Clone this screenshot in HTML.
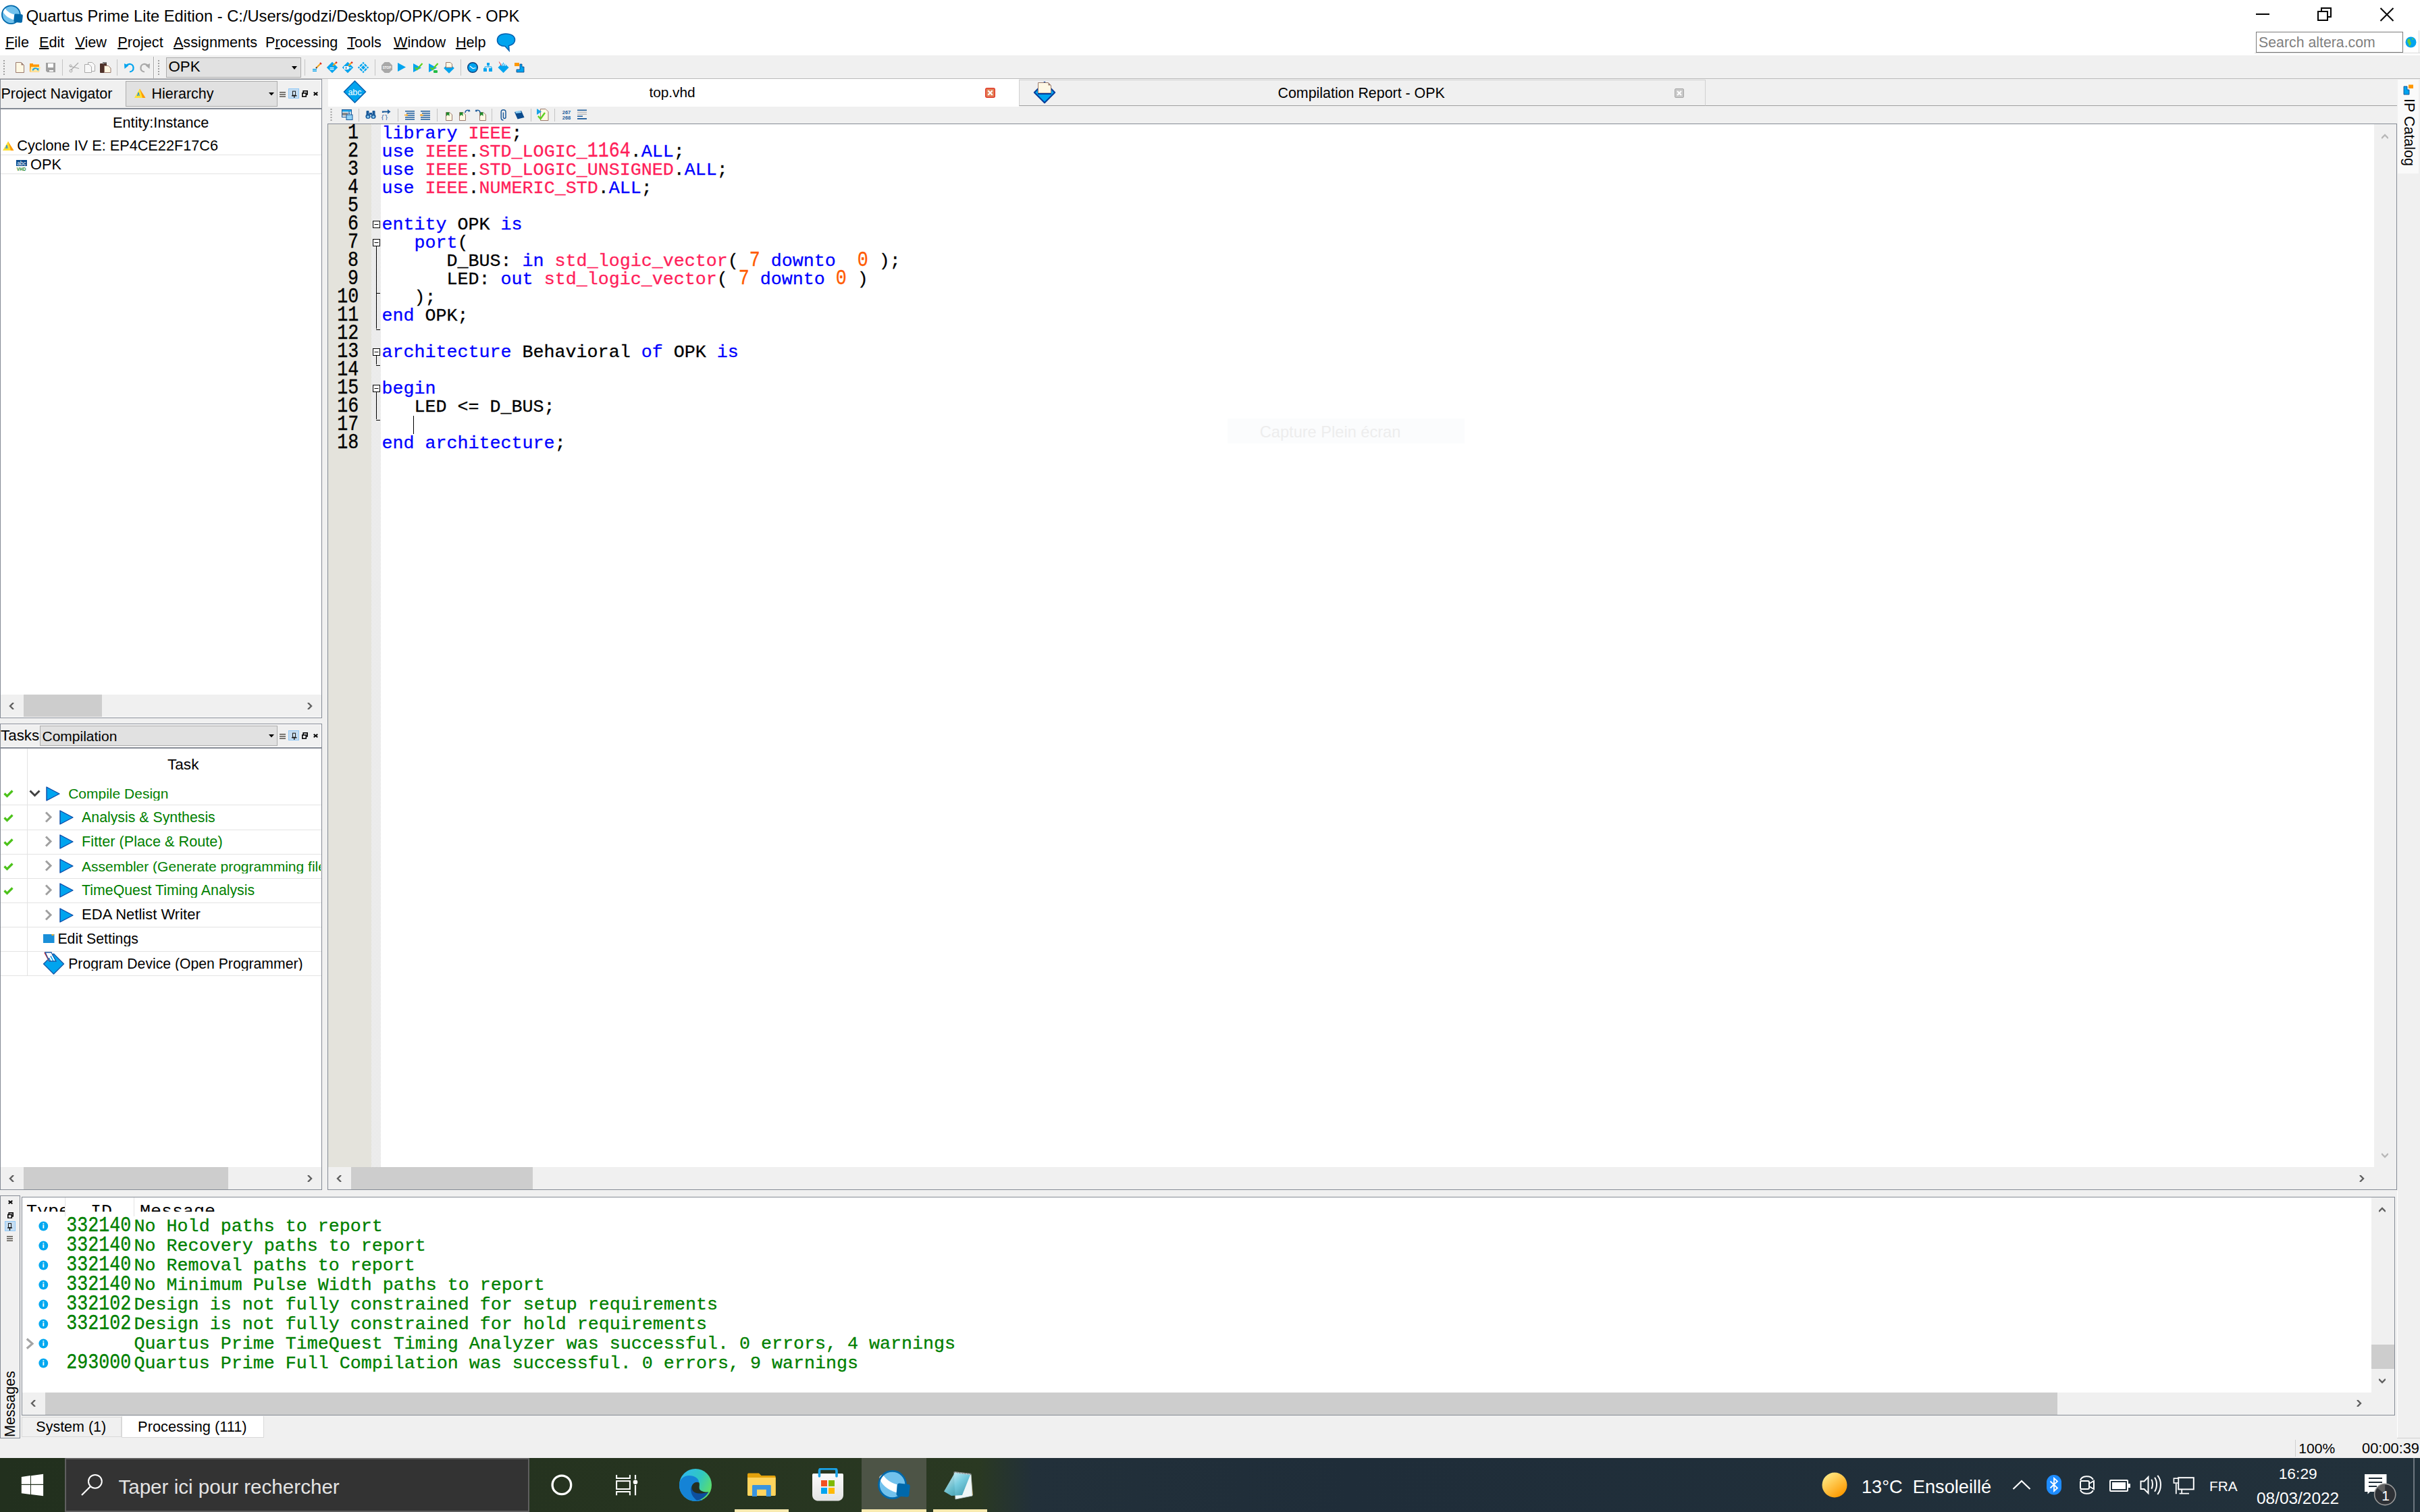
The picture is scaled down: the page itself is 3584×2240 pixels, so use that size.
<!DOCTYPE html>
<html><head><meta charset="utf-8"><style>
html,body{margin:0;padding:0}
body{width:3584px;height:2240px;position:relative;overflow:hidden;background:#f0f0f0;font-family:'Liberation Sans', sans-serif}
.t{position:absolute;white-space:pre;line-height:1}
.r{position:absolute}
.dg{display:inline-block;transform:scaleY(1.15);transform-origin:0 20.3px}
u{text-decoration:underline;text-underline-offset:1px;text-decoration-thickness:2px}
</style></head><body>
<div class="r" style="left:0px;top:0px;width:3584px;height:82px;background:#fff"></div>
<div class="t" style="left:38.7px;top:13.1px;font-size:23.7px;color:#000;font-family:'Liberation Sans', sans-serif;">Quartus Prime Lite Edition - C:/Users/godzi/Desktop/OPK/OPK - OPK</div>
<div class="r" style="left:3341px;top:20px;width:20px;height:2px;background:#000"></div>
<div class="r" style="left:3437px;top:11px;width:16px;height:15px;border:2px solid #000;box-sizing:border-box;background:#fff"></div>
<div class="r" style="left:3432px;top:16px;width:16px;height:15px;border:2px solid #000;box-sizing:border-box;background:#fff"></div>
<svg class="r" style="left:3524px;top:11px" width="22" height="21"><path d="M1.5 1L20.5 20M20.5 1L1.5 20" stroke="#000" stroke-width="2"/></svg>
<div class="t" style="left:8.0px;top:51.8px;font-size:21.7px;color:#000;font-family:'Liberation Sans', sans-serif;"><u>F</u>ile</div>
<div class="t" style="left:58.0px;top:51.8px;font-size:21.7px;color:#000;font-family:'Liberation Sans', sans-serif;"><u>E</u>dit</div>
<div class="t" style="left:111.4px;top:51.8px;font-size:21.7px;color:#000;font-family:'Liberation Sans', sans-serif;"><u>V</u>iew</div>
<div class="t" style="left:174.2px;top:51.8px;font-size:21.7px;color:#000;font-family:'Liberation Sans', sans-serif;"><u>P</u>roject</div>
<div class="t" style="left:256.9px;top:51.8px;font-size:21.7px;color:#000;font-family:'Liberation Sans', sans-serif;"><u>A</u>ssignments</div>
<div class="t" style="left:393.0px;top:51.8px;font-size:21.7px;color:#000;font-family:'Liberation Sans', sans-serif;">P<u>r</u>ocessing</div>
<div class="t" style="left:514.2px;top:51.8px;font-size:21.7px;color:#000;font-family:'Liberation Sans', sans-serif;"><u>T</u>ools</div>
<div class="t" style="left:583.0px;top:51.8px;font-size:21.7px;color:#000;font-family:'Liberation Sans', sans-serif;"><u>W</u>indow</div>
<div class="t" style="left:674.9px;top:51.8px;font-size:21.7px;color:#000;font-family:'Liberation Sans', sans-serif;"><u>H</u>elp</div>
<div class="r" style="left:3341px;top:47px;width:218px;height:31px;border:1px solid #7a7a7a;box-sizing:border-box;background:#fff"></div>
<div class="t" style="left:3345.0px;top:52.5px;font-size:21.3px;color:#7f7f7f;font-family:'Liberation Sans', sans-serif;">Search altera.com</div>
<div class="r" style="left:3339px;top:78px;width:245px;height:1px;background:#d9d9d9"></div>
<div class="r" style="left:3582px;top:45px;width:1px;height:34px;background:#d9d9d9"></div>
<div class="r" style="left:0px;top:83px;width:3584px;height:33px;background:#f0f0f0"></div>
<div class="r" style="left:0px;top:116px;width:3584px;height:1px;background:#b9b9b9"></div>
<div class="r" style="left:246px;top:85px;width:200px;height:30px;background:#e1e1e1;border:1px solid #adadad;box-sizing:border-box"></div>
<div class="t" style="left:249.5px;top:88.1px;font-size:22.3px;color:#000;font-family:'Liberation Sans', sans-serif;">OPK</div>
<div class="r" style="left:0px;top:117px;width:477px;height:947px;border:1px solid #858b95;box-sizing:border-box;background:#fff"></div>
<div class="r" style="left:1px;top:118px;width:475px;height:42px;background:#f0f0f0;border-top:1px solid #fff;border-right:1px solid #fff;box-sizing:border-box"></div>
<div class="r" style="left:1px;top:160px;width:475px;height:2px;background:#858b95"></div>
<div class="t" style="left:1.5px;top:129.1px;font-size:21.5px;color:#000;font-family:'Liberation Sans', sans-serif;">Project Navigator</div>
<div class="r" style="left:186px;top:120px;width:225px;height:38px;background:#e1e1e1;border:1px solid #adadad;box-sizing:border-box"></div>
<div class="t" style="left:224.5px;top:129.1px;font-size:21.5px;color:#000;font-family:'Liberation Sans', sans-serif;">Hierarchy</div>
<div class="t" style="left:167.1px;top:170.6px;font-size:21.7px;color:#000;font-family:'Liberation Sans', sans-serif;">Entity:Instance</div>
<div class="t" style="left:25.3px;top:204.6px;font-size:21.7px;color:#000;font-family:'Liberation Sans', sans-serif;">Cyclone IV E: EP4CE22F17C6</div>
<div class="r" style="left:1px;top:229px;width:475px;height:1px;background:#e3e3e3"></div>
<div class="t" style="left:45.1px;top:233.4px;font-size:21.7px;color:#000;font-family:'Liberation Sans', sans-serif;">OPK</div>
<div class="r" style="left:1px;top:257px;width:475px;height:1px;background:#e3e3e3"></div>
<div class="r" style="left:1px;top:1029px;width:475px;height:33px;background:#f0f0f0"></div>
<div class="r" style="left:35px;top:1029px;width:116px;height:33px;background:#cdcdcd"></div>
<div class="r" style="left:0px;top:1072px;width:477px;height:691px;border:1px solid #858b95;box-sizing:border-box;background:#fff"></div>
<div class="r" style="left:1px;top:1073px;width:475px;height:34px;background:#f0f0f0;border-top:1px solid #fff;border-right:1px solid #fff;border-bottom:1px solid #fff;box-sizing:border-box"></div>
<div class="r" style="left:1px;top:1107px;width:475px;height:2px;background:#858b95"></div>
<div class="t" style="left:1.0px;top:1078.9px;font-size:22.4px;color:#000;font-family:'Liberation Sans', sans-serif;">Tasks</div>
<div class="r" style="left:59px;top:1075px;width:352px;height:30px;background:#e1e1e1;border:1px solid #adadad;box-sizing:border-box"></div>
<div class="t" style="left:62.5px;top:1080.1px;font-size:21.0px;color:#000;font-family:'Liberation Sans', sans-serif;">Compilation</div>
<div class="r" style="left:40px;top:1109px;width:1px;height:336px;background:#e3e3e3"></div>
<div class="t" style="left:248.0px;top:1121.9px;font-size:22.6px;color:#000;font-family:'Liberation Sans', sans-serif;">Task</div>
<div class="t" style="left:101.2px;top:1164.6px;font-size:21.0px;color:#008000;font-family:'Liberation Sans', sans-serif;width:374px;overflow:hidden">Compile Design</div>
<div class="r" style="left:1px;top:1192px;width:475px;height:1px;background:#e3e3e3"></div>
<div class="t" style="left:121.1px;top:1200.5px;font-size:21.3px;color:#008000;font-family:'Liberation Sans', sans-serif;width:354px;overflow:hidden">Analysis &amp; Synthesis</div>
<div class="r" style="left:1px;top:1229px;width:475px;height:1px;background:#e3e3e3"></div>
<div class="t" style="left:121.1px;top:1236.2px;font-size:21.7px;color:#008000;font-family:'Liberation Sans', sans-serif;width:354px;overflow:hidden">Fitter (Place &amp; Route)</div>
<div class="r" style="left:1px;top:1265px;width:475px;height:1px;background:#e3e3e3"></div>
<div class="t" style="left:121.1px;top:1272.9px;font-size:21.0px;color:#008000;font-family:'Liberation Sans', sans-serif;width:354px;overflow:hidden">Assembler (Generate programming files)</div>
<div class="r" style="left:1px;top:1301px;width:475px;height:1px;background:#e3e3e3"></div>
<div class="t" style="left:121.1px;top:1308.8px;font-size:21.3px;color:#008000;font-family:'Liberation Sans', sans-serif;width:354px;overflow:hidden">TimeQuest Timing Analysis</div>
<div class="r" style="left:1px;top:1337px;width:475px;height:1px;background:#e3e3e3"></div>
<div class="t" style="left:121.1px;top:1344.3px;font-size:22.0px;color:#000;font-family:'Liberation Sans', sans-serif;width:354px;overflow:hidden">EDA Netlist Writer</div>
<div class="r" style="left:1px;top:1373px;width:475px;height:1px;background:#e3e3e3"></div>
<div class="t" style="left:85.4px;top:1381.0px;font-size:21.3px;color:#000;font-family:'Liberation Sans', sans-serif;width:390px;overflow:hidden">Edit Settings</div>
<div class="r" style="left:1px;top:1409px;width:475px;height:1px;background:#e3e3e3"></div>
<div class="t" style="left:101.2px;top:1417.2px;font-size:21.2px;color:#000;font-family:'Liberation Sans', sans-serif;width:374px;overflow:hidden">Program Device (Open Programmer)</div>
<div class="r" style="left:1px;top:1445px;width:475px;height:1px;background:#e3e3e3"></div>
<div class="r" style="left:1px;top:1729px;width:475px;height:33px;background:#f0f0f0"></div>
<div class="r" style="left:35px;top:1729px;width:303px;height:33px;background:#cdcdcd"></div>
<div class="r" style="left:485px;top:117px;width:3065px;height:41px;background:#f0f0f0"></div>
<div class="r" style="left:486px;top:117px;width:1023px;height:41px;background:#fff"></div>
<div class="r" style="left:1509px;top:118px;width:1017px;height:39px;background:#f0f0f0;border:1px solid #d0d0d0;border-bottom:1px solid #a0a0a0;box-sizing:border-box"></div>
<div class="r" style="left:2526px;top:156px;width:1024px;height:1px;background:#a0a0a0"></div>
<div class="t" style="left:961.4px;top:127.4px;font-size:20.8px;color:#000;font-family:'Liberation Sans', sans-serif;">top.vhd</div>
<div class="t" style="left:1892.5px;top:128.2px;font-size:21.4px;color:#000;font-family:'Liberation Sans', sans-serif;">Compilation Report - OPK</div>
<div class="r" style="left:485px;top:158px;width:3065px;height:25px;background:#f0f0f0"></div>
<div class="r" style="left:485px;top:183px;width:3065px;height:1580px;border:1px solid #858b95;box-sizing:border-box;background:#fff"></div>
<div class="r" style="left:486px;top:184px;width:64px;height:1545px;background:#e4e3dc"></div>
<div class="r" style="left:550px;top:184px;width:14px;height:1545px;background:repeating-conic-gradient(#d8d8d8 0 25%,#ffffff 0 50%) 0 0/2px 2px"></div>
<div class="r" style="left:3516px;top:184px;width:33px;height:1545px;background:#f0f0f0"></div>
<div class="r" style="left:486px;top:1729px;width:3063px;height:33px;background:#f0f0f0"></div>
<div class="r" style="left:520px;top:1729px;width:269px;height:33px;background:#cdcdcd"></div>
<div class="t" style="left:565.5px;top:185.3px;font-size:26.68px;color:#000;font-family:'Liberation Mono', monospace;-webkit-text-stroke:0.3px currentColor;"><span style="color:#0000ff">library</span><span style="color:#000"> </span><span style="color:#ff1f5a">IEEE</span><span style="color:#000">;</span></div>
<div class="t" style="left:515.1px;top:185.3px;font-size:26.68px;color:#000;font-family:'Liberation Mono', monospace;-webkit-text-stroke:0.3px currentColor;"><span class="dg">1</span></div>
<div class="t" style="left:565.5px;top:212.3px;font-size:26.68px;color:#000;font-family:'Liberation Mono', monospace;-webkit-text-stroke:0.3px currentColor;"><span style="color:#0000ff">use</span><span style="color:#000"> </span><span style="color:#ff1f5a">IEEE</span><span style="color:#000">.</span><span style="color:#ff1f5a">STD_LOGIC_<span class="dg">1164</span></span><span style="color:#000">.</span><span style="color:#0000ff">ALL</span><span style="color:#000">;</span></div>
<div class="t" style="left:515.1px;top:212.3px;font-size:26.68px;color:#000;font-family:'Liberation Mono', monospace;-webkit-text-stroke:0.3px currentColor;"><span class="dg">2</span></div>
<div class="t" style="left:565.5px;top:239.3px;font-size:26.68px;color:#000;font-family:'Liberation Mono', monospace;-webkit-text-stroke:0.3px currentColor;"><span style="color:#0000ff">use</span><span style="color:#000"> </span><span style="color:#ff1f5a">IEEE</span><span style="color:#000">.</span><span style="color:#ff1f5a">STD_LOGIC_UNSIGNED</span><span style="color:#000">.</span><span style="color:#0000ff">ALL</span><span style="color:#000">;</span></div>
<div class="t" style="left:515.1px;top:239.3px;font-size:26.68px;color:#000;font-family:'Liberation Mono', monospace;-webkit-text-stroke:0.3px currentColor;"><span class="dg">3</span></div>
<div class="t" style="left:565.5px;top:266.3px;font-size:26.68px;color:#000;font-family:'Liberation Mono', monospace;-webkit-text-stroke:0.3px currentColor;"><span style="color:#0000ff">use</span><span style="color:#000"> </span><span style="color:#ff1f5a">IEEE</span><span style="color:#000">.</span><span style="color:#ff1f5a">NUMERIC_STD</span><span style="color:#000">.</span><span style="color:#0000ff">ALL</span><span style="color:#000">;</span></div>
<div class="t" style="left:515.1px;top:266.3px;font-size:26.68px;color:#000;font-family:'Liberation Mono', monospace;-webkit-text-stroke:0.3px currentColor;"><span class="dg">4</span></div>
<div class="t" style="left:565.5px;top:293.3px;font-size:26.68px;color:#000;font-family:'Liberation Mono', monospace;-webkit-text-stroke:0.3px currentColor;"></div>
<div class="t" style="left:515.1px;top:293.3px;font-size:26.68px;color:#000;font-family:'Liberation Mono', monospace;-webkit-text-stroke:0.3px currentColor;"><span class="dg">5</span></div>
<div class="t" style="left:565.5px;top:320.3px;font-size:26.68px;color:#000;font-family:'Liberation Mono', monospace;-webkit-text-stroke:0.3px currentColor;"><span style="color:#0000ff">entity</span><span style="color:#000"> OPK </span><span style="color:#0000ff">is</span></div>
<div class="t" style="left:515.1px;top:320.3px;font-size:26.68px;color:#000;font-family:'Liberation Mono', monospace;-webkit-text-stroke:0.3px currentColor;"><span class="dg">6</span></div>
<div class="t" style="left:565.5px;top:347.3px;font-size:26.68px;color:#000;font-family:'Liberation Mono', monospace;-webkit-text-stroke:0.3px currentColor;"><span style="color:#000">   </span><span style="color:#0000ff">port</span><span style="color:#000">(</span></div>
<div class="t" style="left:515.1px;top:347.3px;font-size:26.68px;color:#000;font-family:'Liberation Mono', monospace;-webkit-text-stroke:0.3px currentColor;"><span class="dg">7</span></div>
<div class="t" style="left:565.5px;top:374.3px;font-size:26.68px;color:#000;font-family:'Liberation Mono', monospace;-webkit-text-stroke:0.3px currentColor;"><span style="color:#000">      D_BUS: </span><span style="color:#0000ff">in</span><span style="color:#000"> </span><span style="color:#ff1f5a">std_logic_vector</span><span style="color:#000">( </span><span style="color:#ff5a00"><span class="dg">7</span></span><span style="color:#000"> </span><span style="color:#0000ff">downto</span><span style="color:#000">  </span><span style="color:#ff5a00"><span class="dg">0</span></span><span style="color:#000"> );</span></div>
<div class="t" style="left:515.1px;top:374.3px;font-size:26.68px;color:#000;font-family:'Liberation Mono', monospace;-webkit-text-stroke:0.3px currentColor;"><span class="dg">8</span></div>
<div class="t" style="left:565.5px;top:401.3px;font-size:26.68px;color:#000;font-family:'Liberation Mono', monospace;-webkit-text-stroke:0.3px currentColor;"><span style="color:#000">      LED: </span><span style="color:#0000ff">out</span><span style="color:#000"> </span><span style="color:#ff1f5a">std_logic_vector</span><span style="color:#000">( </span><span style="color:#ff5a00"><span class="dg">7</span></span><span style="color:#000"> </span><span style="color:#0000ff">downto</span><span style="color:#000"> </span><span style="color:#ff5a00"><span class="dg">0</span></span><span style="color:#000"> )</span></div>
<div class="t" style="left:515.1px;top:401.3px;font-size:26.68px;color:#000;font-family:'Liberation Mono', monospace;-webkit-text-stroke:0.3px currentColor;"><span class="dg">9</span></div>
<div class="t" style="left:565.5px;top:428.3px;font-size:26.68px;color:#000;font-family:'Liberation Mono', monospace;-webkit-text-stroke:0.3px currentColor;"><span style="color:#000">   );</span></div>
<div class="t" style="left:499.2px;top:428.3px;font-size:26.68px;color:#000;font-family:'Liberation Mono', monospace;-webkit-text-stroke:0.3px currentColor;"><span class="dg">10</span></div>
<div class="t" style="left:565.5px;top:455.3px;font-size:26.68px;color:#000;font-family:'Liberation Mono', monospace;-webkit-text-stroke:0.3px currentColor;"><span style="color:#0000ff">end</span><span style="color:#000"> OPK;</span></div>
<div class="t" style="left:499.2px;top:455.3px;font-size:26.68px;color:#000;font-family:'Liberation Mono', monospace;-webkit-text-stroke:0.3px currentColor;"><span class="dg">11</span></div>
<div class="t" style="left:565.5px;top:482.3px;font-size:26.68px;color:#000;font-family:'Liberation Mono', monospace;-webkit-text-stroke:0.3px currentColor;"></div>
<div class="t" style="left:499.2px;top:482.3px;font-size:26.68px;color:#000;font-family:'Liberation Mono', monospace;-webkit-text-stroke:0.3px currentColor;"><span class="dg">12</span></div>
<div class="t" style="left:565.5px;top:509.3px;font-size:26.68px;color:#000;font-family:'Liberation Mono', monospace;-webkit-text-stroke:0.3px currentColor;"><span style="color:#0000ff">architecture</span><span style="color:#000"> Behavioral </span><span style="color:#0000ff">of</span><span style="color:#000"> OPK </span><span style="color:#0000ff">is</span></div>
<div class="t" style="left:499.2px;top:509.3px;font-size:26.68px;color:#000;font-family:'Liberation Mono', monospace;-webkit-text-stroke:0.3px currentColor;"><span class="dg">13</span></div>
<div class="t" style="left:565.5px;top:536.3px;font-size:26.68px;color:#000;font-family:'Liberation Mono', monospace;-webkit-text-stroke:0.3px currentColor;"></div>
<div class="t" style="left:499.2px;top:536.3px;font-size:26.68px;color:#000;font-family:'Liberation Mono', monospace;-webkit-text-stroke:0.3px currentColor;"><span class="dg">14</span></div>
<div class="t" style="left:565.5px;top:563.3px;font-size:26.68px;color:#000;font-family:'Liberation Mono', monospace;-webkit-text-stroke:0.3px currentColor;"><span style="color:#0000ff">begin</span></div>
<div class="t" style="left:499.2px;top:563.3px;font-size:26.68px;color:#000;font-family:'Liberation Mono', monospace;-webkit-text-stroke:0.3px currentColor;"><span class="dg">15</span></div>
<div class="t" style="left:565.5px;top:590.3px;font-size:26.68px;color:#000;font-family:'Liberation Mono', monospace;-webkit-text-stroke:0.3px currentColor;"><span style="color:#000">   LED &lt;= D_BUS;</span></div>
<div class="t" style="left:499.2px;top:590.3px;font-size:26.68px;color:#000;font-family:'Liberation Mono', monospace;-webkit-text-stroke:0.3px currentColor;"><span class="dg">16</span></div>
<div class="t" style="left:565.5px;top:617.3px;font-size:26.68px;color:#000;font-family:'Liberation Mono', monospace;-webkit-text-stroke:0.3px currentColor;"></div>
<div class="t" style="left:499.2px;top:617.3px;font-size:26.68px;color:#000;font-family:'Liberation Mono', monospace;-webkit-text-stroke:0.3px currentColor;"><span class="dg">17</span></div>
<div class="t" style="left:565.5px;top:644.3px;font-size:26.68px;color:#000;font-family:'Liberation Mono', monospace;-webkit-text-stroke:0.3px currentColor;"><span style="color:#0000ff">end</span><span style="color:#000"> </span><span style="color:#0000ff">architecture</span><span style="color:#000">;</span></div>
<div class="t" style="left:499.2px;top:644.3px;font-size:26.68px;color:#000;font-family:'Liberation Mono', monospace;-webkit-text-stroke:0.3px currentColor;"><span class="dg">18</span></div>
<div class="r" style="left:1818px;top:620px;width:351px;height:37px;background:#fbfcfd"></div>
<div class="t" style="left:1865.8px;top:629.0px;font-size:23.6px;color:#ededed;font-family:'Liberation Sans', sans-serif;">Capture Plein écran</div>
<div class="r" style="left:3551px;top:118px;width:31px;height:139px;background:#fafafa"></div>
<div class="t" style="left:3556px;top:146px;font-size:21.5px;font-family:'Liberation Sans', sans-serif;transform-origin:0 0;transform:translate(22px,0) rotate(90deg)">IP Catalog</div>
<div class="r" style="left:3550px;top:1764px;width:1px;height:366px;background:#fff"></div>
<div class="r" style="left:3550px;top:2130px;width:34px;height:1px;background:#d0d0d0"></div>
<div class="r" style="left:0px;top:1771px;width:30px;height:360px;border:1px solid #858b95;box-sizing:border-box;background:#f0f0f0"></div>
<div class="r" style="left:32px;top:1773px;width:3515px;height:324px;border:1px solid #858b95;box-sizing:border-box;background:#fff"></div>
<div class="r" style="left:3512px;top:1774px;width:34px;height:289px;background:#f0f0f0"></div>
<div class="r" style="left:3512px;top:1992px;width:34px;height:36px;background:#cdcdcd"></div>
<div class="r" style="left:33px;top:2063px;width:3513px;height:33px;background:#f0f0f0"></div>
<div class="r" style="left:67px;top:2063px;width:2980px;height:33px;background:#cdcdcd"></div>
<div class="t" style="left:98.2px;top:1803.5px;font-size:26.68px;color:#008000;font-family:'Liberation Mono', monospace;-webkit-text-stroke:0.3px currentColor;"><span class="dg">332140</span></div>
<div class="t" style="left:198.6px;top:1803.5px;font-size:26.68px;color:#008000;font-family:'Liberation Mono', monospace;-webkit-text-stroke:0.3px currentColor;">No Hold paths to report</div>
<svg class="r" style="left:57px;top:1809.2px" width="15" height="15"><circle cx="7.3" cy="7.5" r="6.9" fill="#00a8f0"/><rect x="6.4" y="5.6" width="1.9" height="5.2" fill="#fff"/><rect x="6.4" y="3.2" width="1.9" height="1.4" fill="#fff"/></svg>
<div class="t" style="left:98.2px;top:1832.5px;font-size:26.68px;color:#008000;font-family:'Liberation Mono', monospace;-webkit-text-stroke:0.3px currentColor;"><span class="dg">332140</span></div>
<div class="t" style="left:198.6px;top:1832.5px;font-size:26.68px;color:#008000;font-family:'Liberation Mono', monospace;-webkit-text-stroke:0.3px currentColor;">No Recovery paths to report</div>
<svg class="r" style="left:57px;top:1838.2px" width="15" height="15"><circle cx="7.3" cy="7.5" r="6.9" fill="#00a8f0"/><rect x="6.4" y="5.6" width="1.9" height="5.2" fill="#fff"/><rect x="6.4" y="3.2" width="1.9" height="1.4" fill="#fff"/></svg>
<div class="t" style="left:98.2px;top:1861.5px;font-size:26.68px;color:#008000;font-family:'Liberation Mono', monospace;-webkit-text-stroke:0.3px currentColor;"><span class="dg">332140</span></div>
<div class="t" style="left:198.6px;top:1861.5px;font-size:26.68px;color:#008000;font-family:'Liberation Mono', monospace;-webkit-text-stroke:0.3px currentColor;">No Removal paths to report</div>
<svg class="r" style="left:57px;top:1867.2px" width="15" height="15"><circle cx="7.3" cy="7.5" r="6.9" fill="#00a8f0"/><rect x="6.4" y="5.6" width="1.9" height="5.2" fill="#fff"/><rect x="6.4" y="3.2" width="1.9" height="1.4" fill="#fff"/></svg>
<div class="t" style="left:98.2px;top:1890.5px;font-size:26.68px;color:#008000;font-family:'Liberation Mono', monospace;-webkit-text-stroke:0.3px currentColor;"><span class="dg">332140</span></div>
<div class="t" style="left:198.6px;top:1890.5px;font-size:26.68px;color:#008000;font-family:'Liberation Mono', monospace;-webkit-text-stroke:0.3px currentColor;">No Minimum Pulse Width paths to report</div>
<svg class="r" style="left:57px;top:1896.2px" width="15" height="15"><circle cx="7.3" cy="7.5" r="6.9" fill="#00a8f0"/><rect x="6.4" y="5.6" width="1.9" height="5.2" fill="#fff"/><rect x="6.4" y="3.2" width="1.9" height="1.4" fill="#fff"/></svg>
<div class="t" style="left:98.2px;top:1919.5px;font-size:26.68px;color:#008000;font-family:'Liberation Mono', monospace;-webkit-text-stroke:0.3px currentColor;"><span class="dg">332102</span></div>
<div class="t" style="left:198.6px;top:1919.5px;font-size:26.68px;color:#008000;font-family:'Liberation Mono', monospace;-webkit-text-stroke:0.3px currentColor;">Design is not fully constrained for setup requirements</div>
<svg class="r" style="left:57px;top:1925.2px" width="15" height="15"><circle cx="7.3" cy="7.5" r="6.9" fill="#00a8f0"/><rect x="6.4" y="5.6" width="1.9" height="5.2" fill="#fff"/><rect x="6.4" y="3.2" width="1.9" height="1.4" fill="#fff"/></svg>
<div class="t" style="left:98.2px;top:1948.5px;font-size:26.68px;color:#008000;font-family:'Liberation Mono', monospace;-webkit-text-stroke:0.3px currentColor;"><span class="dg">332102</span></div>
<div class="t" style="left:198.6px;top:1948.5px;font-size:26.68px;color:#008000;font-family:'Liberation Mono', monospace;-webkit-text-stroke:0.3px currentColor;">Design is not fully constrained for hold requirements</div>
<svg class="r" style="left:57px;top:1954.2px" width="15" height="15"><circle cx="7.3" cy="7.5" r="6.9" fill="#00a8f0"/><rect x="6.4" y="5.6" width="1.9" height="5.2" fill="#fff"/><rect x="6.4" y="3.2" width="1.9" height="1.4" fill="#fff"/></svg>
<div class="t" style="left:98.2px;top:1977.5px;font-size:26.68px;color:#008000;font-family:'Liberation Mono', monospace;-webkit-text-stroke:0.3px currentColor;"></div>
<div class="t" style="left:198.6px;top:1977.5px;font-size:26.68px;color:#008000;font-family:'Liberation Mono', monospace;-webkit-text-stroke:0.3px currentColor;">Quartus Prime TimeQuest Timing Analyzer was successful. 0 errors, 4 warnings</div>
<svg class="r" style="left:57px;top:1983.2px" width="15" height="15"><circle cx="7.3" cy="7.5" r="6.9" fill="#00a8f0"/><rect x="6.4" y="5.6" width="1.9" height="5.2" fill="#fff"/><rect x="6.4" y="3.2" width="1.9" height="1.4" fill="#fff"/></svg>
<div class="t" style="left:98.2px;top:2006.5px;font-size:26.68px;color:#008000;font-family:'Liberation Mono', monospace;-webkit-text-stroke:0.3px currentColor;"><span class="dg">293000</span></div>
<div class="t" style="left:198.6px;top:2006.5px;font-size:26.68px;color:#008000;font-family:'Liberation Mono', monospace;-webkit-text-stroke:0.3px currentColor;">Quartus Prime Full Compilation was successful. 0 errors, 9 warnings</div>
<svg class="r" style="left:57px;top:2012.2px" width="15" height="15"><circle cx="7.3" cy="7.5" r="6.9" fill="#00a8f0"/><rect x="6.4" y="5.6" width="1.9" height="5.2" fill="#fff"/><rect x="6.4" y="3.2" width="1.9" height="1.4" fill="#fff"/></svg>
<div class="r" style="left:33px;top:1774px;width:3479px;height:21px;overflow:hidden"><div class="t" style="left:6px;top:8.0px;width:57px;overflow:hidden;font-size:26.68px;font-family:'Liberation Mono', monospace">Type</div><div class="t" style="left:101px;top:8.0px;font-size:26.68px;font-family:'Liberation Mono', monospace">ID</div><div class="t" style="left:174px;top:8.0px;font-size:26.68px;font-family:'Liberation Mono', monospace">Message</div></div>
<div class="r" style="left:96px;top:1774px;width:1px;height:28px;background:#e3e3e3"></div>
<div class="r" style="left:198px;top:1774px;width:1px;height:28px;background:#e3e3e3"></div>
<div class="t" style="left:5px;top:2129px;font-size:21.5px;font-family:'Liberation Sans', sans-serif;transform-origin:0 0;transform:rotate(-90deg)">Messages</div>
<div class="r" style="left:32px;top:2099px;width:148px;height:30px;background:#f0f0f0;border:1px solid #d9d9d9;box-sizing:border-box"></div>
<div class="r" style="left:180px;top:2098px;width:211px;height:32px;background:#fff;border:1px solid #d9d9d9;border-top:none;box-sizing:border-box"></div>
<div class="t" style="left:53.3px;top:2103.8px;font-size:21.5px;color:#000;font-family:'Liberation Sans', sans-serif;">System (1)</div>
<div class="t" style="left:204.1px;top:2103.0px;font-size:21.8px;color:#000;font-family:'Liberation Sans', sans-serif;">Processing (111)</div>
<div class="r" style="left:3399px;top:2133px;width:1px;height:25px;background:#d0d0d0"></div>
<div class="t" style="left:3404.2px;top:2135.1px;font-size:21.1px;color:#000;font-family:'Liberation Sans', sans-serif;">100%</div>
<div class="t" style="left:3498.1px;top:2134.5px;font-size:21.8px;color:#000;font-family:'Liberation Sans', sans-serif;">00:00:39</div>
<div class="r" style="left:0;top:2160px;width:3584px;height:80px;background:linear-gradient(90deg,#22301e 0px,#263420 1000px,#2a3922 1450px,#22303a 1530px,#1f2d39 2000px,#22313b 3584px)"></div>
<div class="r" style="left:96px;top:2160px;width:688px;height:80px;background:#333;border:2px solid #5f5f5f;box-sizing:border-box"></div>
<div class="t" style="left:175.4px;top:2187.7px;font-size:29.6px;color:#e3e3e3;font-family:'Liberation Sans', sans-serif;">Taper ici pour rechercher</div>
<div class="r" style="left:1276px;top:2160px;width:96px;height:80px;background:#4d5446"></div>
<div class="t" style="left:2757.0px;top:2188.9px;font-size:27.2px;color:#fff;font-family:'Liberation Sans', sans-serif;">13°C  Ensoleillé</div>
<div class="t" style="left:3272.0px;top:2192.4px;font-size:20.8px;color:#fff;font-family:'Liberation Sans', sans-serif;">FRA</div>
<div class="t" style="left:3374.7px;top:2171.7px;font-size:22.8px;color:#fff;font-family:'Liberation Sans', sans-serif;">16:29</div>
<div class="t" style="left:3342.0px;top:2208.3px;font-size:24.4px;color:#fff;font-family:'Liberation Sans', sans-serif;">08/03/2022</div>
<svg class="r" style="left:0px;top:0px;" width="36" height="37" viewBox="0 0 36 37"><circle cx="16.4" cy="21.7" r="13.4" fill="#72c2ed"/><path d="M3.5 14.5 C5 21 11 26.5 20.5 29.5 L21 21.5 C15 20 10 16.5 7 11.5 C5.5 12 4 13 3.5 14.5 Z" fill="#fff"/><circle cx="16.4" cy="21.7" r="13.4" fill="none" stroke="#0068aa" stroke-width="1.8"/><rect x="20.8" y="20.8" width="12.6" height="12.6" rx="2" fill="#0068aa" transform="rotate(6 27 27)"/></svg>
<svg class="r" style="left:735px;top:48px;" width="30" height="30" viewBox="0 0 30 30"><path d="M14 2 C6 2 1.5 6 1.5 11.5 C1.5 17 6 20.5 13 20.5 L19 27 L18.5 19.8 C24 18.5 27.5 15.5 27.5 11 C27.5 5.5 22 2 14 2 Z" fill="#00a4ef" stroke="#0060b0" stroke-width="1.6"/></svg>
<svg class="r" style="left:3562px;top:54px;" width="17" height="17" viewBox="0 0 17 17"><circle cx="8.5" cy="8.5" r="8" fill="#00a4ef"/><path d="M4 4 C6 3 8 4 7.5 6 C7 8 9 8 9 10 C9 12 7 13 7 15 C5 13 5.5 11 4.5 10 C3.5 9 2.5 7 4 4Z M10 2 C12 3 13 4 12 5 C11 6 10 4 10 2Z" fill="#6ccb3b"/></svg>
<svg class="r" style="left:4px;top:87px;" width="4" height="27" viewBox="0 0 4 27"><rect x="1" y="2" width="2" height="2" fill="#a0a0a0"/><rect x="1" y="6" width="2" height="2" fill="#a0a0a0"/><rect x="1" y="10" width="2" height="2" fill="#a0a0a0"/><rect x="1" y="14" width="2" height="2" fill="#a0a0a0"/><rect x="1" y="18" width="2" height="2" fill="#a0a0a0"/><rect x="1" y="22" width="2" height="2" fill="#a0a0a0"/></svg>
<svg class="r" style="left:233px;top:87px;" width="4" height="27" viewBox="0 0 4 27"><rect x="1" y="2" width="2" height="2" fill="#a0a0a0"/><rect x="1" y="6" width="2" height="2" fill="#a0a0a0"/><rect x="1" y="10" width="2" height="2" fill="#a0a0a0"/><rect x="1" y="14" width="2" height="2" fill="#a0a0a0"/><rect x="1" y="18" width="2" height="2" fill="#a0a0a0"/><rect x="1" y="22" width="2" height="2" fill="#a0a0a0"/></svg>
<div class="r" style="left:227px;top:84px;width:1px;height:32px;background:#a8a8a8"></div>
<div class="r" style="left:228px;top:84px;width:1px;height:32px;background:#fff"></div>
<div class="r" style="left:92px;top:88px;width:1px;height:24px;background:#c4c4c4"></div>
<div class="r" style="left:173px;top:88px;width:1px;height:24px;background:#c4c4c4"></div>
<div class="r" style="left:451px;top:88px;width:1px;height:24px;background:#c4c4c4"></div>
<div class="r" style="left:555px;top:88px;width:1px;height:24px;background:#c4c4c4"></div>
<div class="r" style="left:682px;top:88px;width:1px;height:24px;background:#c4c4c4"></div>
<svg class="r" style="left:23px;top:92px;" width="13" height="17" viewBox="0 0 13 17"><path d="M0.5 0.5 H8.5 L12.5 4.5 V15.5 H0.5 Z" fill="#fff8e4" stroke="#9b7b6e" stroke-width="1"/><path d="M8.5 0.5 V4.5 H12.5 Z" fill="#9b7b6e"/></svg>
<svg class="r" style="left:43px;top:93px;" width="18" height="15" viewBox="0 0 18 15"><path d="M1 1 H6 V2.5 H15 V13.5 H1 Z" fill="#ff9800"/><path d="M3 6 H17 L15.5 13.5 H1.5 Z" fill="#ffe7a2"/><path d="M5.5 11.5 C6 8 11 7 13 9.5" stroke="#1aa3e8" stroke-width="1.8" fill="none"/><path d="M11 10 L14.5 7.5 L14 12 Z" fill="#1aa3e8"/></svg>
<svg class="r" style="left:68px;top:93px;" width="14" height="14" viewBox="0 0 14 14"><path d="M0 0 H14 V14 H2 L0 12 Z" fill="#a0a0a0"/><rect x="3" y="1" width="8" height="6" fill="#fff"/><rect x="5" y="11" width="6" height="2" fill="#fff"/></svg>
<svg class="r" style="left:102px;top:92px;" width="16" height="16" viewBox="0 0 16 16"><path d="M3 12 L14 1 M1 6 L15 9.5" stroke="#a8a8a8" stroke-width="1.2" fill="none"/><circle cx="3" cy="13" r="2" fill="none" stroke="#a8a8a8"/><circle cx="2.5" cy="5.5" r="1.6" fill="none" stroke="#a8a8a8"/></svg>
<svg class="r" style="left:125px;top:92px;" width="16" height="17" viewBox="0 0 16 17"><path d="M5.5 0.5 H11.5 L15.5 4.5 V13.5 H5.5 Z" fill="#f8f8f8" stroke="#aaa"/><path d="M0.5 3.5 H7 L10.5 7 V15.5 H0.5 Z" fill="#f8f8f8" stroke="#aaa"/></svg>
<svg class="r" style="left:148px;top:92px;" width="17" height="17" viewBox="0 0 17 17"><rect x="0" y="2" width="7" height="14" rx="1" fill="#4e3129"/><rect x="4" y="0" width="6" height="3" fill="#7a7a7a"/><rect x="6" y="2" width="4" height="3" fill="#4e3129"/><path d="M6.5 5.5 H12.5 L16 9 V15.5 H6.5 Z" fill="#fff8e4" stroke="#9b7b6e"/></svg>
<svg class="r" style="left:183px;top:92px;" width="17" height="16" viewBox="0 0 17 16"><path d="M4 5.5 C7 1.5 14 2 14.5 8 C15 12 12 14 9 14.5" stroke="#00a4ef" stroke-width="2.2" fill="none"/><path d="M1 2 L1.5 10 L7.5 5 Z" fill="#00a4ef"/></svg>
<svg class="r" style="left:206px;top:92px;" width="17" height="16" viewBox="0 0 17 16"><path d="M13 5.5 C10 1.5 3 2 2.5 8 C2 12 5 14 8 14.5" stroke="#a8a8a8" stroke-width="2.2" fill="none"/><path d="M16 2 L15.5 10 L9.5 5 Z" fill="#a8a8a8"/></svg>
<svg class="r" style="left:432px;top:98px;" width="8" height="5" viewBox="0 0 8 5"><path d="M0 0 H8 L4 5 Z" fill="#000"/></svg>
<svg class="r" style="left:462px;top:92px;" width="15" height="14" viewBox="0 0 15 14"><rect x="1" y="10" width="6" height="1.4" fill="#00a4ef"/><rect x="1" y="12.5" width="6" height="1.4" fill="#00a4ef"/><path d="M6.5 8.5 L13 2" stroke="#f5a31a" stroke-width="2"/><path d="M12 1 L14 3" stroke="#e02020" stroke-width="2"/><path d="M6 9 L7.2 7.8" stroke="#333" stroke-width="2"/></svg>
<svg class="r" style="left:483px;top:91px;" width="18" height="18" viewBox="0 0 18 18"><path d="M9 0.8000000000000007 L17.2 9 L9 17.2 L0.8000000000000007 9 Z" fill="#00a4ef"/><rect x="5.5" y="9" width="6" height="1.2" fill="#fff"/><rect x="5.5" y="11.2" width="6" height="1.2" fill="#fff"/><path d="M10 6.5 L15 1.5" stroke="#f5a31a" stroke-width="2"/><path d="M14.3 0.8 L16 2.5" stroke="#e02020" stroke-width="2"/></svg>
<svg class="r" style="left:506px;top:91px;" width="18" height="18" viewBox="0 0 18 18"><path d="M9 0.8000000000000007 L17.2 9 L9 17.2 L0.8000000000000007 9 Z" fill="#00a4ef"/><path d="M3.5 7 H10 L11 9 H14.5 V10 H11 L10 12 H3.5 Z" fill="#fff"/><rect x="6" y="8" width="1" height="3" fill="#003c80"/><path d="M10 6.5 L15 1.5" stroke="#f5a31a" stroke-width="2"/><path d="M14.3 0.8 L16 2.5" stroke="#e02020" stroke-width="2"/></svg>
<svg class="r" style="left:529px;top:91px;" width="18" height="18" viewBox="0 0 18 18"><path d="M9 0.8000000000000007 L17.2 9 L9 17.2 L0.8000000000000007 9 Z" fill="#00a4ef"/><path d="M2 6 L12 16 M6 2 L16 12 M2 12 L12 2 M6 16 L16 6" stroke="#f0f0f0" stroke-width="1.3"/></svg>
<svg class="r" style="left:565px;top:92px;" width="16" height="16" viewBox="0 0 16 16"><path d="M4.7 0 H11.3 L16 4.7 V11.3 L11.3 16 H4.7 L0 11.3 V4.7 Z" fill="#a8a8a8"/><text x="1.8" y="10.3" font-family="Liberation Sans" font-size="5.6" font-weight="bold" fill="#fff" textLength="12.4" lengthAdjust="spacingAndGlyphs">STOP</text></svg>
<svg class="r" style="left:589px;top:93px;" width="13" height="14" viewBox="0 0 13 14"><path d="M0 0 L12 6.5 L0 13 Z" fill="#00a4ef"/></svg>
<svg class="r" style="left:612px;top:92px;" width="15" height="16" viewBox="0 0 15 16"><path d="M0 2 L12 8.5 L0 15 Z" fill="#00a4ef"/><path d="M2.5 8 L5.5 11 L13.5 2" stroke="#5ed21e" stroke-width="2.2" fill="none"/></svg>
<svg class="r" style="left:635px;top:92px;" width="16" height="18" viewBox="0 0 16 18"><path d="M0 2 L12 8.5 L0 15 Z" fill="#00a4ef"/><path d="M2.5 8 L5.5 11 L13.5 2" stroke="#5ed21e" stroke-width="2.2" fill="none"/><rect x="7" y="12" width="6" height="4" rx="1" fill="#22bb44"/></svg>
<svg class="r" style="left:657px;top:92px;" width="16" height="17" viewBox="0 0 16 17"><path d="M8 1.2000000000000002 L15.8 9 L8 16.8 L0.20000000000000018 9 Z" fill="#00a4ef"/><path d="M3.5 0.5 H10 L12.5 3 V8 H3.5 Z" fill="#fff8e4" stroke="#9b7b6e"/></svg>
<svg class="r" style="left:692px;top:92px;" width="16" height="16" viewBox="0 0 16 16"><circle cx="8" cy="8" r="7.3" fill="#00a4ef" stroke="#0a3d7a" stroke-width="1.4"/><path d="M4 6 L8.5 9.5 L12.5 8.5" stroke="#fff" stroke-width="1.2" fill="none"/></svg>
<svg class="r" style="left:715px;top:92px;" width="16" height="16" viewBox="0 0 16 16"><rect x="6" y="1" width="4" height="4" fill="#00a4ef"/><path d="M8 5 V7 H3 V9 M8 7 H13 V9" stroke="#00a4ef" fill="none"/><rect x="1" y="9" width="5" height="5" fill="#00a4ef"/><rect x="9" y="9" width="5" height="5" fill="#00a4ef"/></svg>
<svg class="r" style="left:737px;top:91px;" width="17" height="17" viewBox="0 0 17 17"><path d="M8.5 1 L16.5 9 L8.5 17 L0.5 9 Z" fill="#00a4ef"/><path d="M3.5 0.5 L7 6.5 M6 0.5 L9.5 6.5 M8.5 0.5 L12 6.5" stroke="#fff" stroke-width="1.2"/><path d="M2.3 0.5 L5.6 6.5" stroke="#e03030" stroke-width="1"/></svg>
<svg class="r" style="left:761px;top:92px;" width="16" height="16" viewBox="0 0 16 16"><rect x="1" y="1" width="7" height="5" fill="#ff9800"/><path d="M9 3 H12 V7 H15 V15 H4 V11 H9 Z" fill="#00a4ef" stroke="#003c80" stroke-width="0.8"/></svg>
<svg class="r" style="left:397.5px;top:136.5px;" width="8" height="5" viewBox="0 0 8 5"><path d="M0 0 H8 L4 4.5 Z" fill="#000"/></svg>
<svg class="r" style="left:414px;top:136px;" width="9" height="9" viewBox="0 0 9 9"><rect x="0" y="0" width="9" height="1.6" fill="#5f5b55"/><rect x="0" y="3.2" width="9" height="1.6" fill="#5f5b55"/><rect x="0" y="6.3" width="9" height="1.6" fill="#5f5b55"/></svg>
<svg class="r" style="left:427px;top:131px;" width="16" height="15" viewBox="0 0 16 15"><rect x="0.5" y="0.5" width="15" height="14" fill="#c5ddf2" stroke="#90c8f6"/><rect x="6.5" y="4.2" width="4" height="6" fill="#d8ecfa" stroke="#222" stroke-width="1.1"/><path d="M5 10.8 H12.5" stroke="#111" stroke-width="1.4"/><path d="M8.8 10.5 V14" stroke="#111" stroke-width="1.3"/></svg>
<svg class="r" style="left:447px;top:134px;" width="9" height="10" viewBox="0 0 9 10"><rect x="2.2" y="0.8" width="6" height="5" fill="none" stroke="#000" stroke-width="1.6"/><rect x="0.8" y="4" width="5.5" height="5" fill="#fff" stroke="#000" stroke-width="1.6"/></svg>
<svg class="r" style="left:463.5px;top:136px;" width="7" height="6" viewBox="0 0 7 6"><path d="M0.7 0.7 L6.3 5.3 M6.3 0.7 L0.7 5.3" stroke="#000" stroke-width="1.8"/></svg>
<svg class="r" style="left:397.5px;top:1087.5px;" width="8" height="5" viewBox="0 0 8 5"><path d="M0 0 H8 L4 4.5 Z" fill="#000"/></svg>
<svg class="r" style="left:414px;top:1087px;" width="9" height="9" viewBox="0 0 9 9"><rect x="0" y="0" width="9" height="1.6" fill="#5f5b55"/><rect x="0" y="3.2" width="9" height="1.6" fill="#5f5b55"/><rect x="0" y="6.3" width="9" height="1.6" fill="#5f5b55"/></svg>
<svg class="r" style="left:427px;top:1082px;" width="16" height="15" viewBox="0 0 16 15"><rect x="0.5" y="0.5" width="15" height="14" fill="#c5ddf2" stroke="#90c8f6"/><rect x="6.5" y="4.2" width="4" height="6" fill="#d8ecfa" stroke="#222" stroke-width="1.1"/><path d="M5 10.8 H12.5" stroke="#111" stroke-width="1.4"/><path d="M8.8 10.5 V14" stroke="#111" stroke-width="1.3"/></svg>
<svg class="r" style="left:447px;top:1085px;" width="9" height="10" viewBox="0 0 9 10"><rect x="2.2" y="0.8" width="6" height="5" fill="none" stroke="#000" stroke-width="1.6"/><rect x="0.8" y="4" width="5.5" height="5" fill="#fff" stroke="#000" stroke-width="1.6"/></svg>
<svg class="r" style="left:463.5px;top:1087px;" width="7" height="6" viewBox="0 0 7 6"><path d="M0.7 0.7 L6.3 5.3 M6.3 0.7 L0.7 5.3" stroke="#000" stroke-width="1.8"/></svg>
<svg class="r" style="left:199px;top:131px;" width="17" height="15" viewBox="0 0 17 15"><path d="M8 0.5 L16.5 14 L4 14 Z" fill="#ff9b00"/><path d="M8 0.5 L12 14 H0 Z" fill="#ffe033"/><path d="M6 6 L4.5 11 M6 6 L7.5 11 M6 8.5 L5.2 11" stroke="#1a8fe0" stroke-width="1"/></svg>
<svg class="r" style="left:4px;top:209px;" width="17" height="15" viewBox="0 0 17 15"><path d="M8 0.5 L16.5 14 L4 14 Z" fill="#ff9b00"/><path d="M8 0.5 L12 14 H0 Z" fill="#ffe033"/><path d="M6 6 L4.5 11 M6 6 L7.5 11 M6 8.5 L5.2 11" stroke="#1a8fe0" stroke-width="1"/></svg>
<svg class="r" style="left:24px;top:237px;" width="16" height="16" viewBox="0 0 16 16"><rect x="0" y="0" width="16" height="9" fill="#0a4a8c"/><text x="8" y="7.6" font-family="Liberation Sans" font-size="8.5" fill="#fff" text-anchor="middle">abc</text><text x="7.5" y="15.5" font-family="Liberation Sans" font-size="6.5" font-weight="bold" fill="#1f8a2a" text-anchor="middle">VHD</text></svg>
<svg class="r" style="left:13px;top:1041px;" width="9" height="10" viewBox="0 0 9 10"><path d="M7 0 L2 5 L7 10" stroke="#606060" stroke-width="2.4" fill="none"/></svg>
<svg class="r" style="left:454px;top:1041px;" width="9" height="10" viewBox="0 0 9 10"><path d="M2 0 L7 5 L2 10" stroke="#606060" stroke-width="2.4" fill="none"/></svg>
<svg class="r" style="left:13px;top:1741px;" width="9" height="10" viewBox="0 0 9 10"><path d="M7 0 L2 5 L7 10" stroke="#606060" stroke-width="2.4" fill="none"/></svg>
<svg class="r" style="left:454px;top:1741px;" width="9" height="10" viewBox="0 0 9 10"><path d="M2 0 L7 5 L2 10" stroke="#606060" stroke-width="2.4" fill="none"/></svg>
<svg class="r" style="left:498px;top:1741px;" width="9" height="10" viewBox="0 0 9 10"><path d="M7 0 L2 5 L7 10" stroke="#606060" stroke-width="2.4" fill="none"/></svg>
<svg class="r" style="left:3493px;top:1741px;" width="9" height="10" viewBox="0 0 9 10"><path d="M2 0 L7 5 L2 10" stroke="#606060" stroke-width="2.4" fill="none"/></svg>
<svg class="r" style="left:3527px;top:198px;" width="10" height="9" viewBox="0 0 10 9"><path d="M0 7 L5 2 L10 7" stroke="#b8b8b8" stroke-width="2.4" fill="none"/></svg>
<svg class="r" style="left:3527px;top:1707px;" width="10" height="9" viewBox="0 0 10 9"><path d="M0 2 L5 7 L10 2" stroke="#b8b8b8" stroke-width="2.4" fill="none"/></svg>
<svg class="r" style="left:45px;top:2074px;" width="9" height="10" viewBox="0 0 9 10"><path d="M7 0 L2 5 L7 10" stroke="#606060" stroke-width="2.4" fill="none"/></svg>
<svg class="r" style="left:3489px;top:2074px;" width="9" height="10" viewBox="0 0 9 10"><path d="M2 0 L7 5 L2 10" stroke="#606060" stroke-width="2.4" fill="none"/></svg>
<svg class="r" style="left:3523px;top:1788px;" width="10" height="9" viewBox="0 0 10 9"><path d="M0 7 L5 2 L10 7" stroke="#606060" stroke-width="2.4" fill="none"/></svg>
<svg class="r" style="left:3523px;top:2041px;" width="10" height="9" viewBox="0 0 10 9"><path d="M0 2 L5 7 L10 2" stroke="#606060" stroke-width="2.4" fill="none"/></svg>
<svg class="r" style="left:508px;top:119px;" width="35" height="34" viewBox="0 0 35 34"><path d="M17.5 1 L33.5 17 L17.5 33 L1.5 17 Z" fill="#00a4ef" stroke="#0060b0" stroke-width="1.5"/><text x="17.5" y="21.5" font-family="Liberation Sans" font-size="12.5" fill="#fff" text-anchor="middle">abc</text></svg>
<svg class="r" style="left:1459px;top:130px;" width="15" height="15" viewBox="0 0 15 15"><rect x="0.75" y="0.75" width="13.5" height="13.5" rx="2" fill="#e4845a" stroke="#e03a2a" stroke-width="1.5"/><path d="M4.3 4.3 L10.7 10.7 M10.7 4.3 L4.3 10.7" stroke="#fff" stroke-width="2.2"/></svg>
<svg class="r" style="left:1530px;top:120px;" width="34" height="34" viewBox="0 0 34 34"><path d="M17 1.8000000000000007 L32.2 17 L17 32.2 L1.8000000000000007 17 Z" fill="#00a4ef" stroke="#003c9a" stroke-width="2" stroke-linejoin="round"/><path d="M7.5 2.5 H22.5 L26.5 6.5 V18 H7.5 Z" fill="#fff8e4" stroke="#9b7b6e"/><path d="M22.5 2.5 V6.5 H26.5 Z" fill="#9b7b6e"/><rect x="7" y="18" width="20" height="2" fill="#003c9a"/></svg>
<svg class="r" style="left:2480px;top:131px;" width="14" height="14" viewBox="0 0 14 14"><rect x="0.5" y="0.5" width="13" height="13" rx="1.5" fill="#c8c8c8" stroke="#a8a8a8"/><path d="M4 4 L10 10 M10 4 L4 10" stroke="#fff" stroke-width="2"/></svg>
<svg class="r" style="left:489px;top:160px;" width="3" height="21" viewBox="0 0 3 21"><rect x="0.5" y="1" width="2" height="2" fill="#a0a0a0"/><rect x="0.5" y="5" width="2" height="2" fill="#a0a0a0"/><rect x="0.5" y="9" width="2" height="2" fill="#a0a0a0"/><rect x="0.5" y="13" width="2" height="2" fill="#a0a0a0"/><rect x="0.5" y="17" width="2" height="2" fill="#a0a0a0"/></svg>
<div class="r" style="left:531px;top:161px;width:1px;height:19px;background:#c4c4c4"></div>
<div class="r" style="left:589px;top:161px;width:1px;height:19px;background:#c4c4c4"></div>
<div class="r" style="left:647px;top:161px;width:1px;height:19px;background:#c4c4c4"></div>
<div class="r" style="left:728px;top:161px;width:1px;height:19px;background:#c4c4c4"></div>
<div class="r" style="left:786px;top:161px;width:1px;height:19px;background:#c4c4c4"></div>
<div class="r" style="left:821px;top:161px;width:1px;height:19px;background:#c4c4c4"></div>
<svg class="r" style="left:506px;top:162px;" width="17" height="16" viewBox="0 0 17 16"><rect x="0.5" y="0.5" width="14" height="11" fill="#dfe8f0" stroke="#1a5a9a"/><rect x="1" y="1" width="13" height="2.5" fill="#1aa3e8"/><rect x="1" y="5" width="8" height="4" fill="#888"/><rect x="7" y="8" width="9" height="7.5" fill="#8fd0f5" stroke="#1a5a9a"/><path d="M11 3 V7 L9.5 5.5 M11 7 L12.5 5.5" stroke="#1a5a9a" fill="none"/></svg>
<svg class="r" style="left:541px;top:163px;" width="16" height="14" viewBox="0 0 16 14"><circle cx="4" cy="9.5" r="3.6" fill="#1a5a9a"/><circle cx="12" cy="9.5" r="3.6" fill="#1a5a9a"/><rect x="1.5" y="1" width="4" height="7" rx="1" fill="#1a5a9a"/><rect x="10.5" y="1" width="4" height="7" rx="1" fill="#1a5a9a"/><rect x="6" y="4" width="4" height="3" fill="#1a5a9a"/><circle cx="4" cy="10" r="1.8" fill="#8fd0f5"/><circle cx="12" cy="10" r="1.8" fill="#8fd0f5"/></svg>
<svg class="r" style="left:564px;top:161px;" width="15" height="17" viewBox="0 0 15 17"><path d="M3 6 V4.5 H11" stroke="#1a5a9a" stroke-width="2.2" fill="none"/><path d="M10 1 L14.5 4.5 L10 8 Z" fill="#1a5a9a"/><text x="5.5" y="16" font-family="Liberation Mono" font-size="9" fill="#1a5a9a" text-anchor="middle">{}</text></svg>
<svg class="r" style="left:599px;top:163px;" width="16" height="16" viewBox="0 0 16 16"><rect x="1" y="1" width="14" height="1.5" fill="#1a5a9a"/><rect x="3" y="4" width="12" height="1.5" fill="#1a5a9a"/><rect x="3" y="7" width="12" height="1.5" fill="#1a5a9a"/><rect x="1" y="10" width="14" height="1.5" fill="#1a5a9a"/><rect x="1" y="13" width="14" height="1.5" fill="#1a5a9a"/><path d="M0 7.5 H5" stroke="#f5a31a" stroke-width="1.5"/><path d="M5.5 7.5 L3 5.5 V9.5Z" fill="#f5a31a"/></svg>
<svg class="r" style="left:622px;top:163px;" width="16" height="16" viewBox="0 0 16 16"><rect x="1" y="1" width="14" height="1.5" fill="#1a5a9a"/><rect x="3" y="4" width="12" height="1.5" fill="#1a5a9a"/><rect x="3" y="7" width="12" height="1.5" fill="#1a5a9a"/><rect x="1" y="10" width="14" height="1.5" fill="#1a5a9a"/><rect x="1" y="13" width="14" height="1.5" fill="#1a5a9a"/><path d="M0 7.5 H5" stroke="#f5a31a" stroke-width="1.5"/><path d="M0 7.5 L2.5 5.5 V9.5Z" fill="#f5a31a"/></svg>
<svg class="r" style="left:660px;top:163px;" width="10" height="16" viewBox="0 0 10 16"><path d="M0.5 3.5 H6 L9.5 7 V15.5 H0.5 Z" fill="#fff8e4" stroke="#9b7b6e"/><path d="M1 3.5 H5.5 V9 L3.2 7 L1 9 Z" fill="#1f8a2a"/></svg>
<svg class="r" style="left:680px;top:161px;" width="17" height="18" viewBox="0 0 17 18"><g transform="translate(0,2)"><path d="M0.5 3.5 H6 L9.5 7 V15.5 H0.5 Z" fill="#fff8e4" stroke="#9b7b6e"/><path d="M1 3.5 H5.5 V9 L3.2 7 L1 9 Z" fill="#1f8a2a"/></g><path d="M9 6 C9 2 14 1 15 4" stroke="#1a5a9a" stroke-width="1.5" fill="none"/><path d="M13 4.5 L16.5 4 L15 1 Z" fill="#1a5a9a"/></svg>
<svg class="r" style="left:703px;top:161px;" width="17" height="18" viewBox="0 0 17 18"><g transform="translate(7,2)"><path d="M0.5 3.5 H6 L9.5 7 V15.5 H0.5 Z" fill="#fff8e4" stroke="#9b7b6e"/><path d="M1 3.5 H5.5 V9 L3.2 7 L1 9 Z" fill="#1f8a2a"/></g><path d="M8 6 C8 2 3 1 2 4" stroke="#1a5a9a" stroke-width="1.5" fill="none"/><path d="M4 4.5 L0.5 4 L2 1 Z" fill="#1a5a9a"/></svg>
<svg class="r" style="left:741px;top:162px;" width="10" height="17" viewBox="0 0 10 17"><path d="M4.5 16 C2 16 1.2 14.2 1.2 12.5 V4 C1.2 1.8 2.8 0.8 4.6 0.8 C6.4 0.8 8 1.8 8 4 V11.5 C8 12.8 7.2 13.5 6.2 13.5 C5.2 13.5 4.4 12.8 4.4 11.5 V4.5" stroke="#1a5a9a" stroke-width="1.5" fill="none"/></svg>
<svg class="r" style="left:762px;top:164px;" width="15" height="13" viewBox="0 0 15 13"><path d="M0 2 L10 0 L14.5 10 L4.5 12.5 Z" fill="#0a4a8c"/><path d="M1 1 L9 0 L10 3 L2 4Z" fill="#8fd0f5"/></svg>
<svg class="r" style="left:795px;top:161px;" width="18" height="18" viewBox="0 0 18 18"><path d="M5.5 0.5 H13 L17 4.5 V17.5 H5.5 Z" fill="#fff8e4" stroke="#9b7b6e"/><path d="M0 0 L7 4.5 L0 9 Z" fill="#1aa3e8"/><path d="M2 11 L5.5 15 L12 6" stroke="#5ed21e" stroke-width="2.4" fill="none"/></svg>
<svg class="r" style="left:831px;top:162px;" width="16" height="16" viewBox="0 0 16 16"><text x="8" y="7" font-family="Liberation Sans" font-size="7.5" font-weight="bold" fill="#1a5a9a" text-anchor="middle">267</text><text x="8" y="14.5" font-family="Liberation Sans" font-size="7.5" font-weight="bold" fill="#1a5a9a" text-anchor="middle">268</text></svg>
<svg class="r" style="left:855px;top:162px;" width="14" height="16" viewBox="0 0 14 16"><rect x="0" y="0.5" width="14" height="1.5" fill="#1a5a9a"/><rect x="0" y="3.5" width="14" height="1.5" fill="#bbb"/><rect x="0" y="6.5" width="14" height="1.5" fill="#bbb"/><rect x="0" y="9.5" width="8" height="1.5" fill="#1a5a9a"/><rect x="0" y="13" width="14" height="1.8" fill="#1a5a9a"/></svg>
<svg class="r" style="left:552px;top:327px;" width="11" height="11" viewBox="0 0 11 11"><rect x="0.5" y="0.5" width="10" height="10" fill="#fff" stroke="#000"/><path d="M2.5 5.5 H8.5" stroke="#000"/></svg>
<svg class="r" style="left:552px;top:354px;" width="11" height="11" viewBox="0 0 11 11"><rect x="0.5" y="0.5" width="10" height="10" fill="#fff" stroke="#000"/><path d="M2.5 5.5 H8.5" stroke="#000"/></svg>
<svg class="r" style="left:552px;top:516px;" width="11" height="11" viewBox="0 0 11 11"><rect x="0.5" y="0.5" width="10" height="10" fill="#fff" stroke="#000"/><path d="M2.5 5.5 H8.5" stroke="#000"/></svg>
<svg class="r" style="left:552px;top:570px;" width="11" height="11" viewBox="0 0 11 11"><rect x="0.5" y="0.5" width="10" height="10" fill="#fff" stroke="#000"/><path d="M2.5 5.5 H8.5" stroke="#000"/></svg>
<div class="r" style="left:557px;top:365px;width:1px;height:122px;background:#000"></div>
<div class="r" style="left:557px;top:488px;width:6px;height:1px;background:#000"></div>
<div class="r" style="left:557px;top:434px;width:6px;height:1px;background:#000"></div>
<div class="r" style="left:557px;top:527px;width:1px;height:13px;background:#000"></div>
<div class="r" style="left:557px;top:541px;width:6px;height:1px;background:#000"></div>
<div class="r" style="left:557px;top:581px;width:1px;height:40px;background:#000"></div>
<div class="r" style="left:557px;top:622px;width:6px;height:1px;background:#000"></div>
<div class="r" style="left:612px;top:616px;width:1px;height:27px;background:#000"></div>
<svg class="r" style="left:3559px;top:125px;" width="16" height="16" viewBox="0 0 16 16"><rect x="8" y="0.5" width="7" height="5.5" fill="#ff9800"/><path d="M1 3 H6 V8 H9 V15 H1 Z" fill="#00a4ef" stroke="#003c80" stroke-width="0.8"/></svg>
<svg class="r" style="left:5px;top:1170px;" width="15" height="12" viewBox="0 0 15 12"><path d="M1.5 5.5 L5.5 9.5 L13.5 1.5" stroke="#4cc21a" stroke-width="3.2" fill="none"/></svg>
<svg class="r" style="left:5px;top:1206px;" width="15" height="12" viewBox="0 0 15 12"><path d="M1.5 5.5 L5.5 9.5 L13.5 1.5" stroke="#4cc21a" stroke-width="3.2" fill="none"/></svg>
<svg class="r" style="left:5px;top:1242px;" width="15" height="12" viewBox="0 0 15 12"><path d="M1.5 5.5 L5.5 9.5 L13.5 1.5" stroke="#4cc21a" stroke-width="3.2" fill="none"/></svg>
<svg class="r" style="left:5px;top:1278px;" width="15" height="12" viewBox="0 0 15 12"><path d="M1.5 5.5 L5.5 9.5 L13.5 1.5" stroke="#4cc21a" stroke-width="3.2" fill="none"/></svg>
<svg class="r" style="left:5px;top:1314px;" width="15" height="12" viewBox="0 0 15 12"><path d="M1.5 5.5 L5.5 9.5 L13.5 1.5" stroke="#4cc21a" stroke-width="3.2" fill="none"/></svg>
<svg class="r" style="left:43px;top:1170px;" width="17" height="11" viewBox="0 0 17 11"><path d="M1.5 1.5 L8.5 8.5 L15.5 1.5" stroke="#404040" stroke-width="3" fill="none"/></svg>
<svg class="r" style="left:68px;top:1164.5px;" width="21" height="22" viewBox="0 0 21 22"><path d="M1 1 L20 11 L1 21 Z" fill="#00a4ef" stroke="#0a4aa8" stroke-width="1.4" stroke-linejoin="round"/></svg>
<svg class="r" style="left:66px;top:1202px;" width="12" height="17" viewBox="0 0 12 17"><path d="M2 1.5 L9 8.5 L2 15.5" stroke="#a0a0a0" stroke-width="3" fill="none"/></svg>
<svg class="r" style="left:88px;top:1200px;" width="21" height="22" viewBox="0 0 21 22"><path d="M1 1 L20 11 L1 21 Z" fill="#00a4ef" stroke="#0a4aa8" stroke-width="1.4" stroke-linejoin="round"/></svg>
<svg class="r" style="left:66px;top:1238px;" width="12" height="17" viewBox="0 0 12 17"><path d="M2 1.5 L9 8.5 L2 15.5" stroke="#a0a0a0" stroke-width="3" fill="none"/></svg>
<svg class="r" style="left:88px;top:1236px;" width="21" height="22" viewBox="0 0 21 22"><path d="M1 1 L20 11 L1 21 Z" fill="#00a4ef" stroke="#0a4aa8" stroke-width="1.4" stroke-linejoin="round"/></svg>
<svg class="r" style="left:66px;top:1274px;" width="12" height="17" viewBox="0 0 12 17"><path d="M2 1.5 L9 8.5 L2 15.5" stroke="#a0a0a0" stroke-width="3" fill="none"/></svg>
<svg class="r" style="left:88px;top:1272px;" width="21" height="22" viewBox="0 0 21 22"><path d="M1 1 L20 11 L1 21 Z" fill="#00a4ef" stroke="#0a4aa8" stroke-width="1.4" stroke-linejoin="round"/></svg>
<svg class="r" style="left:66px;top:1310px;" width="12" height="17" viewBox="0 0 12 17"><path d="M2 1.5 L9 8.5 L2 15.5" stroke="#a0a0a0" stroke-width="3" fill="none"/></svg>
<svg class="r" style="left:88px;top:1308px;" width="21" height="22" viewBox="0 0 21 22"><path d="M1 1 L20 11 L1 21 Z" fill="#00a4ef" stroke="#0a4aa8" stroke-width="1.4" stroke-linejoin="round"/></svg>
<svg class="r" style="left:66px;top:1347px;" width="12" height="17" viewBox="0 0 12 17"><path d="M2 1.5 L9 8.5 L2 15.5" stroke="#a0a0a0" stroke-width="3" fill="none"/></svg>
<svg class="r" style="left:88px;top:1345px;" width="21" height="22" viewBox="0 0 21 22"><path d="M1 1 L20 11 L1 21 Z" fill="#00a4ef" stroke="#0a4aa8" stroke-width="1.4" stroke-linejoin="round"/></svg>
<svg class="r" style="left:64px;top:1384px;" width="17" height="14" viewBox="0 0 17 14"><rect x="0" y="0" width="16.5" height="13" fill="#1a8fd8"/><rect x="12.5" y="0" width="3" height="2" fill="#ffb020"/></svg>
<svg class="r" style="left:63px;top:1410px;" width="34" height="34" viewBox="0 0 34 34"><path d="M16.5 3 L31.5 18 L16.5 33 L1.5 18 Z" fill="#00a4ef" stroke="#1a5aa8" stroke-width="1.4" stroke-linejoin="round"/><path d="M3 1 L10 14 M7 1 L14 14 M11 1 L18 14" stroke="#fff" stroke-width="2"/><path d="M3 1 L10 14" stroke="#e02020" stroke-width="1.6"/><path d="M4 1 H13 L20 14 H10 Z" fill="none" stroke="#1a5aa8" stroke-width="1.3"/></svg>
<svg class="r" style="left:12px;top:1778px;" width="7" height="6" viewBox="0 0 7 6"><path d="M0.7 0.7 L6.3 5.3 M6.3 0.7 L0.7 5.3" stroke="#000" stroke-width="1.8"/></svg>
<svg class="r" style="left:11px;top:1796px;" width="9" height="9" viewBox="0 0 9 9"><rect x="2.2" y="0.8" width="6" height="5" fill="none" stroke="#000" stroke-width="1.6"/><rect x="0.8" y="3.5" width="5.5" height="5" fill="#fff" stroke="#000" stroke-width="1.6"/></svg>
<svg class="r" style="left:7px;top:1809px;" width="16" height="16" viewBox="0 0 16 16"><rect x="0.5" y="0.5" width="15" height="14" fill="#c5ddf2" stroke="#90c8f6"/><rect x="5.5" y="3.5" width="4" height="6" fill="#d8ecfa" stroke="#222" stroke-width="1.1"/><path d="M4 10 H11" stroke="#111" stroke-width="1.4"/><path d="M7.5 10 V14" stroke="#111" stroke-width="1.3"/></svg>
<svg class="r" style="left:10px;top:1831px;" width="9" height="9" viewBox="0 0 9 9"><rect x="0" y="0" width="9" height="1.6" fill="#5f5b55"/><rect x="0" y="3.2" width="9" height="1.6" fill="#5f5b55"/><rect x="0" y="6.3" width="9" height="1.6" fill="#5f5b55"/></svg>
<svg class="r" style="left:38px;top:1982px;" width="12" height="18" viewBox="0 0 12 18"><path d="M1.8 1.5 L10 8.6 L1.8 15.8" stroke="#a4a4a4" stroke-width="3.2" fill="none"/></svg>
<svg class="r" style="left:31px;top:2183px;" width="34" height="34" viewBox="0 0 34 34"><path d="M0.8 5 L14 3 V15.8 H0.8 Z M15 3.2 L33.1 0.8 V15.8 H15 Z M0.8 17 H14 V31 L0.8 29.2 Z M15 17 H33.1 V33.2 L15 31 Z" fill="#fff"/></svg>
<svg class="r" style="left:119px;top:2183px;" width="34" height="34" viewBox="0 0 34 34"><circle cx="21.9" cy="11.8" r="9.9" fill="none" stroke="#fff" stroke-width="2"/><path d="M14.8 19.2 L2 32" stroke="#fff" stroke-width="2.2"/></svg>
<svg class="r" style="left:815px;top:2183px;" width="35" height="35" viewBox="0 0 35 35"><circle cx="16.9" cy="16.9" r="13.8" fill="none" stroke="#fff" stroke-width="3.3"/></svg>
<svg class="r" style="left:911px;top:2184px;" width="34" height="33" viewBox="0 0 34 33"><path d="M2.1 0.9 V6 H21.9 V0.9 M2.1 31.3 V26.1 H21.9 V31.3" stroke="#fff" stroke-width="2" fill="none"/><rect x="2.1" y="10.1" width="19.8" height="11.9" stroke="#fff" stroke-width="2" fill="none"/><path d="M30 0.9 V7.5 M30 16 V31.3" stroke="#fff" stroke-width="2.2"/><circle cx="30" cy="11.8" r="3.3" fill="#fff"/></svg>
<svg class="r" style="left:1005px;top:2175px;" width="50" height="50" viewBox="0 0 50 50"><defs><linearGradient id="eg1" x1="0" y1="0.2" x2="1" y2="0.7"><stop offset="0" stop-color="#2fb8f0"/><stop offset="0.55" stop-color="#30c8c0"/><stop offset="1" stop-color="#62e060"/></linearGradient></defs><circle cx="25" cy="25" r="24" fill="url(#eg1)"/><path d="M1 25 C1 16 8 11 15.5 11 C22 11 29 14 30 20 L30 24 C25 20 18 24 18 32 C18 42 28 48 36 47 C32 48.6 28.5 49 25 49 C11.7 49 1 38.3 1 25 Z" fill="#1583d6"/><path d="M18 32 C18 24 25 20 30 24 L30.5 30 C31 36 38 37.5 44.5 35.5 C40.5 42 34 47 27 47.8 C22 44 18 38 18 32 Z" fill="#0d4f9e"/><path d="M30.5 21.5 C26 19 19.5 22.5 19.5 28.5 C19.5 34 24 37.5 30 37.5 C36 37.5 41 37 44.5 35.5 C38 36 31 34 30.5 29.5 C30.2 27 31.5 25 30.5 21.5 Z" fill="#252f20"/></svg>
<svg class="r" style="left:1107px;top:2182px;" width="43" height="36" viewBox="0 0 43 36"><path d="M0 2.5 C0 1 1 0.5 2 0.5 H17 L20.5 4 H40 C41 4 41.7 5 41.7 6 V32 C41.7 33.5 41 34 40 34 H2 C1 34 0 33.5 0 32 Z" fill="#e3a20c"/><path d="M0 7 H41.7 V32 C41.7 33.5 41 34 40 34 H2 C1 34 0 33.5 0 32 Z" fill="#ffd45e"/><path d="M7 35 V19.5 C7 18.5 7.5 18 8.5 18 H33.3 C34.3 18 34.8 18.5 34.8 19.5 V35 H27.8 V24.7 H14 V35 Z" fill="#3a94e0"/></svg>
<svg class="r" style="left:1203px;top:2175px;" width="46" height="50" viewBox="0 0 46 50"><defs><linearGradient id="stg" x1="0" y1="0" x2="0" y2="1"><stop offset="0" stop-color="#fbfbfb"/><stop offset="1" stop-color="#e4e4e4"/></linearGradient></defs><path d="M0 10 C0 8.5 1 8 2 8 H44 C45 8 46 8.5 46 10 V40 C46 45 42 48.6 37 48.6 H9 C4 48.6 0 45 0 40 Z" fill="url(#stg)"/><path d="M10.5 12 V4 C10.5 2 11.5 1 13.5 1 H33 C35 1 36 2 36 4 V12" stroke="#1aa3e8" stroke-width="3.6" fill="none" stroke-linecap="round"/><rect x="13" y="18" width="9" height="9" fill="#f25022"/><rect x="24" y="18" width="9" height="9" fill="#7fba00"/><rect x="13" y="29" width="9" height="9" fill="#00a4ef"/><rect x="24" y="29" width="9" height="9" fill="#ffb900"/></svg>
<svg class="r" style="left:1297px;top:2167px;" width="52" height="56" viewBox="0 0 52 56"><g transform="scale(1.5)"><circle cx="16.4" cy="21.7" r="13.4" fill="#72c2ed"/><path d="M3.5 14.5 C5 21 11 26.5 20.5 29.5 L21 21.5 C15 20 10 16.5 7 11.5 C5.5 12 4 13 3.5 14.5 Z" fill="#fff"/><circle cx="16.4" cy="21.7" r="13.4" fill="none" stroke="#0068aa" stroke-width="1.8"/><rect x="20.8" y="20.8" width="12.6" height="12.6" rx="2" fill="#0068aa" transform="rotate(6 27 27)"/></g></svg>
<svg class="r" style="left:1397px;top:2179px;" width="46" height="44" viewBox="0 0 46 44"><defs><linearGradient id="npg" x1="0" y1="0" x2="1" y2="1"><stop offset="0" stop-color="#e8fbff"/><stop offset="0.5" stop-color="#6cc8dc"/><stop offset="1" stop-color="#2a8aa0"/></linearGradient></defs><path d="M41 5 L44 36 L41 37 L38 6 Z" fill="#c8a050"/><path d="M16 1.5 L41 4.5 L43 37 L18 42 Z" fill="#eef6f8" stroke="#b8c8cc" stroke-width="0.8"/><path d="M16 2 L41 5" stroke="#666" stroke-width="2.2" stroke-dasharray="1.2 1.2"/><path d="M1 30.5 L17 3 L40 6 L28 36 L12 37 Z" fill="url(#npg)" opacity="0.92"/></svg>
<div class="r" style="left:1088px;top:2236px;width:80px;height:4px;background:#f8eab0"></div>
<div class="r" style="left:1276px;top:2236px;width:96px;height:4px;background:#f8eab0"></div>
<div class="r" style="left:1382px;top:2236px;width:80px;height:4px;background:#f8eab0"></div>
<svg class="r" style="left:2698px;top:2180px;" width="40" height="40" viewBox="0 0 40 40"><defs><linearGradient id="sun" x1="0.2" y1="0.1" x2="0.8" y2="0.9"><stop offset="0" stop-color="#ffe680"/><stop offset="1" stop-color="#ff9a00"/></linearGradient></defs><circle cx="19" cy="20" r="18.5" fill="url(#sun)"/></svg>
<svg class="r" style="left:2980px;top:2192px;" width="28" height="16" viewBox="0 0 28 16"><path d="M1.5 14 L14 2 L26.5 14" stroke="#fff" stroke-width="2.2" fill="none"/></svg>
<svg class="r" style="left:3031px;top:2185px;" width="22" height="30" viewBox="0 0 22 30"><rect x="0" y="0" width="22" height="29.5" rx="11" fill="#1e8cff"/><path d="M5.5 9.5 L16 19.5 L11 24 V5 L16 9.5 L5.5 19.5" stroke="#fff" stroke-width="1.8" fill="none"/></svg>
<svg class="r" style="left:3078px;top:2183px;" width="26" height="34" viewBox="0 0 26 34"><path d="M3 10 C5 3 18 2 22 9 M3 24 C5 31 18 32 22 25" stroke="#fff" stroke-width="2" fill="none"/><rect x="3" y="11" width="13" height="12" rx="2" fill="none" stroke="#fff" stroke-width="2"/><path d="M16 15 L23 11 V23 L16 19" stroke="#fff" stroke-width="2" fill="none"/></svg>
<svg class="r" style="left:3124px;top:2192px;" width="32" height="18" viewBox="0 0 32 18"><rect x="1" y="1" width="26" height="16" rx="1" fill="none" stroke="#fff" stroke-width="2"/><rect x="4" y="4" width="20" height="10" fill="#fff"/><rect x="28" y="6" width="3" height="6" fill="#fff"/></svg>
<svg class="r" style="left:3169px;top:2184px;" width="34" height="32" viewBox="0 0 34 32"><path d="M1.5 10.5 H6.5 L12.5 4.2 V28.1 L6.5 22 H1.5 Z" fill="none" stroke="#fff" stroke-width="2"/><path d="M17.3 7.8 C19.5 11 19.5 18.5 17.3 21.6 M22 4.8 C26 10 26 20 22 25.8 M26.3 1.8 C32.5 9 32.5 22 26.3 30" stroke="#fff" stroke-width="2" fill="none"/></svg>
<svg class="r" style="left:3217px;top:2186px;" width="34" height="29" viewBox="0 0 34 29"><rect x="9.2" y="3.2" width="22.6" height="17.2" fill="none" stroke="#fff" stroke-width="2"/><rect x="2.4" y="4.2" width="6.8" height="6.8" fill="#22303a" stroke="#fff" stroke-width="1.6"/><path d="M5.8 11.8 V27.3 M14.2 20.4 V26 M10.6 26.6 H25" stroke="#fff" stroke-width="1.8"/></svg>
<svg class="r" style="left:3500px;top:2182px;" width="52" height="52" viewBox="0 0 52 52"><path d="M2 2 H34.5 V28 H10 L6.5 31.5 V28 H2 Z" fill="#fff"/><path d="M8 8 H28 M8 14 H28 M8 20 H20" stroke="#1e2a34" stroke-width="2"/><circle cx="32.2" cy="32" r="15.6" fill="#2d3035" stroke="#9a9a9a" stroke-width="1.6"/><path d="M32.2 16.4 A15.6 15.6 0 0 0 20.4 22 L32.2 32 Z" fill="#6a6a6a" opacity="0.8"/><text x="33" y="40.5" font-family="Liberation Sans" font-size="21" fill="#fff" text-anchor="middle">1</text></svg>
<div class="r" style="left:3574px;top:2160px;width:2px;height:80px;background:#6d767e"></div>
</body></html>
